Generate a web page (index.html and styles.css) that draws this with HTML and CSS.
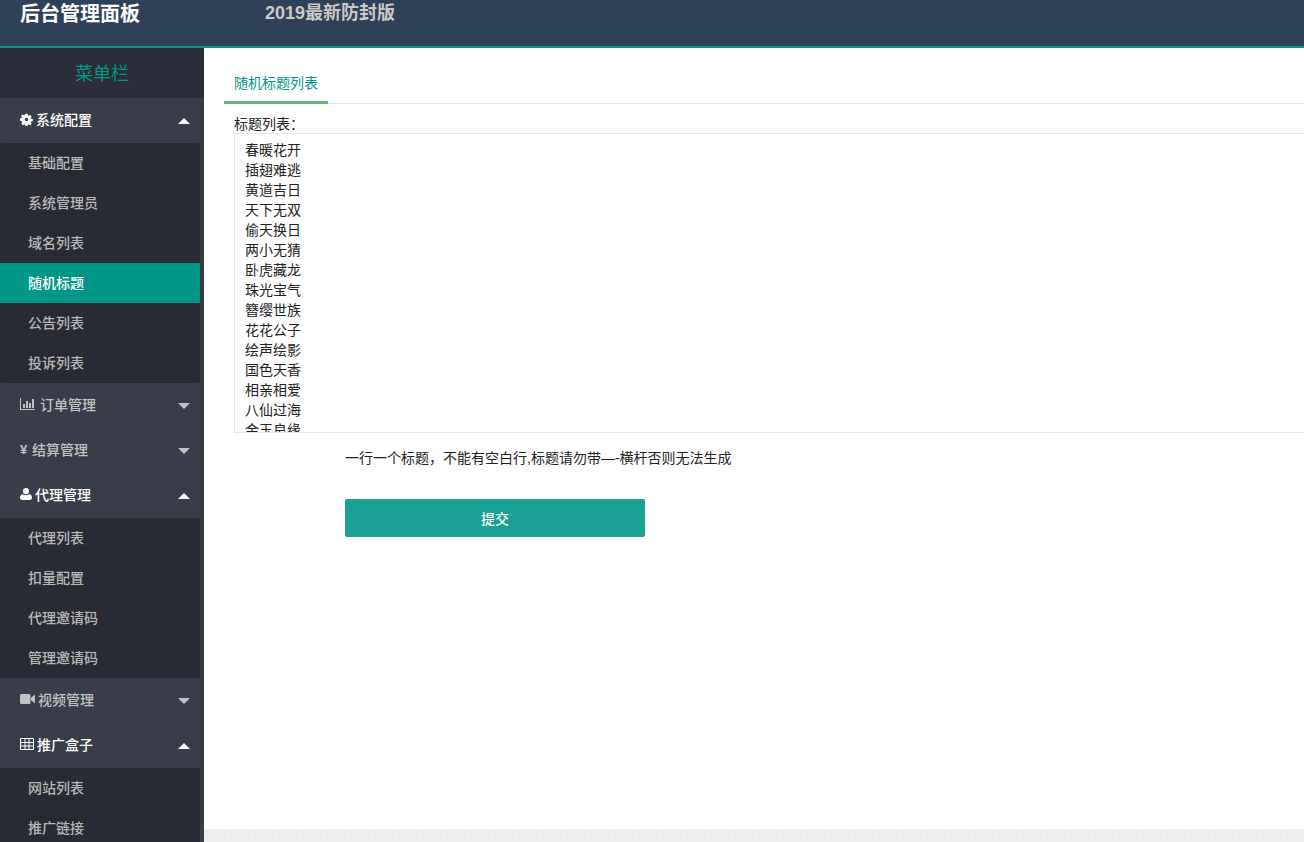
FILE: index.html
```html
<!DOCTYPE html>
<html lang="zh-CN">
<head>
    <meta charset="UTF-8">
    <title>后台管理面板</title>
    <link rel="stylesheet" href="styles.css">
</head>
<body>
    <header class="topbar">
        <div class="logo">后台管理面板</div>
        <div class="version">2019最新防封版</div>
    </header>
    <div class="wrap">
        <aside class="sidebar">
            <div class="side-title">菜单栏</div>

            <div class="menu-head open">
                <span class="menu-name">
                    <svg class="ico cog" viewBox="0 0 16 16"><path d="M6.700 1h2.600l.4 1.900 1.200.5 1.600-1 1.800 1.800-1 1.600.5 1.200 1.900.4v2.600l-1.900.4-.5 1.200 1 1.600-1.800 1.800-1.600-1-1.200.5-.4 1.900H6.700l-.4-1.900-1.200-.5-1.600 1-1.800-1.800 1-1.600-.5-1.200L0 9.300V6.700l1.900-.4.5-1.200-1-1.600 1.800-1.800 1.600 1 1.200-.5zM8 5.800a2.200 2.200 0 1 0 0 4.400 2.200 2.200 0 0 0 0-4.400z" fill-rule="evenodd"/></svg>
                    系统配置
                </span>
                <i class="caret up"></i>
            </div>
            <ul class="submenu">
                <li>基础配置</li>
                <li>系统管理员</li>
                <li>域名列表</li>
                <li class="active">随机标题</li>
                <li>公告列表</li>
                <li>投诉列表</li>
            </ul>

            <div class="menu-head">
                <span class="menu-name">
                    <svg class="ico chart" viewBox="0 0 15 12"><path d="M0 0h1v11h14v1H0zM3 6h2v4H3zM6 3h2v7H6zM9 5h2v5H9zM12 1h2v9h-2z"/></svg>
                    订单管理
                </span>
                <i class="caret"></i>
            </div>

            <div class="menu-head">
                <span class="menu-name"><b class="yen">¥</b>结算管理</span>
                <i class="caret"></i>
            </div>

            <div class="menu-head open">
                <span class="menu-name">
                    <svg class="ico user" viewBox="0 0 12 12"><path d="M6 0a3 3 0 0 1 3 3.100A3 3 0 0 1 6 6.200a3 3 0 0 1-3-3.100A3 3 0 0 1 6 0zM2.800 6.200C3.700 6.900 4.800 7.300 6 7.300s2.300-.4 3.200-1.100c1.800.2 2.800 1.400 2.800 3.600 0 1.300-.9 2.200-2.300 2.200H2.300C.9 12 0 11.100 0 9.800c0-2.200 1-3.400 2.800-3.600z"/></svg>
                    代理管理
                </span>
                <i class="caret up"></i>
            </div>
            <ul class="submenu">
                <li>代理列表</li>
                <li>扣量配置</li>
                <li>代理邀请码</li>
                <li>管理邀请码</li>
            </ul>

            <div class="menu-head">
                <span class="menu-name">
                    <svg class="ico video" viewBox="0 0 15 10"><path d="M1.500 0h7.500A1.500 1.500 0 0 1 10.500 1.500v7A1.500 1.500 0 0 1 9 10H1.500A1.500 1.500 0 0 1 0 8.500v-7A1.500 1.500 0 0 1 1.500 0zM11 3.800 15 .5v9l-4-3.300z"/></svg>
                    视频管理
                </span>
                <i class="caret"></i>
            </div>

            <div class="menu-head open">
                <span class="menu-name">
                    <svg class="ico table" viewBox="0 0 14 12"><path fill-rule="evenodd" d="M1 0h12a1 1 0 0 1 1 1v10a1 1 0 0 1-1 1H1a1 1 0 0 1-1-1V1a1 1 0 0 1 1-1zM1 1v3h3.500V1zm4.500 0v3h3V1zm4 0v3H13V1zM1 5v2.500h3.500V5zm4.500 0v2.500h3V5zm4 0v2.500H13V5zM1 8.500V11h3.500V8.500zm4.500 0V11h3V8.500zm4 0V11H13V8.500z"/></svg>
                    推广盒子
                </span>
                <i class="caret up"></i>
            </div>
            <ul class="submenu">
                <li>网站列表</li>
                <li>推广链接</li>
            </ul>
        </aside>

        <main class="content">
            <div class="tabs">
                <div class="tab">随机标题列表</div>
            </div>
            <form class="form">
                <label class="field-label" for="titles">标题列表：</label>
                <textarea class="titles" id="titles" spellcheck="false">春暖花开
插翅难逃
黄道吉日
天下无双
偷天换日
两小无猜
卧虎藏龙
珠光宝气
簪缨世族
花花公子
绘声绘影
国色天香
相亲相爱
八仙过海
金玉良缘
</textarea>
                <p class="hint">一行一个标题，不能有空白行,标题请勿带—-横杆否则无法生成</p>
                <button type="button" class="submit">提交</button>
            </form>
        </main>
    </div>
    <div class="footer-strip"></div>
</body>
</html>
```
FILE: styles.css
```css
html, body {
    height: 100%;
}
body {
    margin: 0;
    overflow: hidden;
    display: flex;
    flex-direction: column;
    background: #fff;
    color: #333;
    font-family: "Liberation Sans", "Noto Sans CJK SC", sans-serif;
    font-size: 14px;
}

.topbar {
    height: 46px;
    flex: none;
    display: flex;
    align-items: flex-start;
    background: #2f4059;
    border-bottom: 2px solid #009688;
}
.logo {
    width: 245px;
    padding-left: 20px;
    color: #fff;
    font-size: 20px;
    font-weight: 700;
    line-height: 28px;
}
.version {
    color: #c9c9c9;
    font-size: 18px;
    font-weight: 700;
    line-height: 27px;
}

.wrap {
    flex: 1;
    display: flex;
    min-height: 0;
}

.sidebar {
    width: 204px;
    flex: none;
    overflow: hidden;
    background: #393d49;
}
.side-title {
    height: 50px;
    line-height: 52px;
    text-align: center;
    color: #009688;
    font-size: 18px;
    background: #2b2e38;
}
.menu-head {
    height: 45px;
    display: flex;
    align-items: center;
    justify-content: space-between;
    padding: 0 14px 0 20px;
    color: #c2c2c2;
    font-size: 14px;
    font-weight: 500;
}
.menu-head.open {
    color: #fff;
}
.menu-name {
    display: flex;
    align-items: center;
    gap: 3px;
    margin-top: -3px;
}
.ico {
    fill: currentColor;
}
.ico.cog {
    width: 13px;
    height: 13px;
}
.ico.chart {
    width: 15px;
    height: 12px;
    margin-right: 2px;
}
.ico.user {
    width: 12px;
    height: 12px;
}
.ico.video {
    width: 15px;
    height: 10px;
}
.ico.table {
    width: 14px;
    height: 12px;
}
.yen {
    width: 9px;
    font-size: 13px;
}
.caret {
    width: 0;
    height: 0;
    border-left: 6px solid transparent;
    border-right: 6px solid transparent;
    border-top: 6px solid #c2c2c2;
}
.caret.up {
    border-top: 0;
    border-bottom: 6px solid #fff;
}

.submenu {
    width: 200px;
    margin: 0;
    padding: 0;
    list-style: none;
    background: #282b33;
    border-radius: 2px;
}
.submenu li {
    height: 40px;
    line-height: 41px;
    padding-left: 28px;
    color: #b8b8b8;
    font-size: 14px;
    font-weight: 500;
}
.submenu li.active {
    background: #009688;
    color: #fff;
}

.content {
    flex: 1;
    min-width: 0;
    overflow: hidden;
    padding: 15px 0 0 20px;
}
.tabs {
    height: 40px;
    border-bottom: 1px solid #e2e2e2;
}
.tab {
    width: 104px;
    height: 38px;
    line-height: 41px;
    text-align: center;
    color: #009688;
    font-size: 14px;
    border-bottom: 3px solid #5fb878;
}
.form {
    padding-top: 11px;
}
.field-label {
    display: block;
    margin-left: 10px;
    height: 18px;
    line-height: 18px;
    color: #222;
    font-size: 14px;
}
.titles {
    display: block;
    box-sizing: border-box;
    width: 1200px;
    height: 300px;
    margin-left: 10px;
    padding: 6px 10px;
    overflow: hidden;
    resize: none;
    border: 1px solid #e6e6e6;
    outline: 0;
    color: #222;
    font-family: inherit;
    font-size: 14px;
    line-height: 20px;
}
.hint {
    margin: 15px 0 0 121px;
    line-height: 20px;
    color: #222;
    font-size: 14px;
}
.submit {
    display: block;
    width: 300px;
    height: 38px;
    margin: 31px 0 0 121px;
    padding: 0;
    border: 0;
    border-radius: 2px;
    background: #1aa094;
    color: #fff;
    font-family: inherit;
    font-size: 14px;
    font-weight: 500;
}

.footer-strip {
    position: absolute;
    left: 204px;
    right: 0;
    bottom: 0;
    height: 13px;
    background-color: #eee;
    background-image: radial-gradient(#e2e2e2 0.6px, transparent 0.8px);
    background-size: 6px 6px;
}
```
